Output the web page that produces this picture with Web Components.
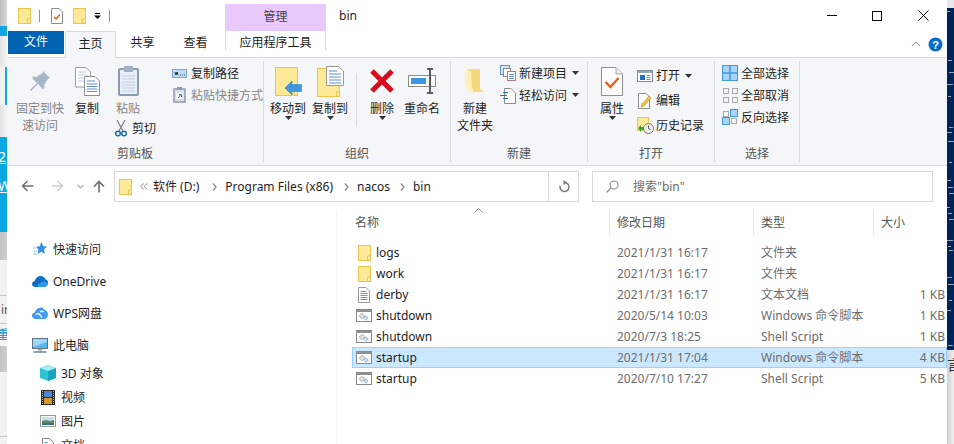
<!DOCTYPE html>
<html>
<head>
<meta charset="utf-8">
<title>bin</title>
<style>
  html, body { margin: 0; padding: 0; width: 954px; height: 444px; overflow: hidden; background: #fff; }
  body { display: flex; font: 12px/17px "Noto Sans", "Noto Sans CJK SC", sans-serif; color: #1e1e1e; }
</style>
</head>
<body>
  <desk-left></desk-left>
  <explorer-window>
    <title-bar></title-bar>
    <ribbon-tabs></ribbon-tabs>
    <ribbon-panel>
      <ribbon-group label="剪贴板" width="257" pad="9">
        <big-button icon="pin" w="48" dim>固定到快<br>速访问</big-button>
        <big-button icon="copy" w="46">复制</big-button>
        <paste-stack>
          <big-button icon="paste" w="36" dim>粘贴</big-button>
          <small-button icon="cut" row="22" w="12" gap="5" style="margin-left:5px">剪切</small-button>
        </paste-stack>
        <small-stack left="16">
          <small-button icon="copypath" row="22" w="15" gap="4">复制路径</small-button>
          <small-button icon="pasteshort" row="22" w="15" gap="4" dim>粘贴快捷方式</small-button>
        </small-stack>
      </ribbon-group>
      <ribbon-group label="组织" width="187" pad="4">
        <big-button icon="moveto" w="40" caret>移动到</big-button>
        <big-button icon="copyto" w="40" caret style="margin-left:2px">复制到</big-button>
        <ribbon-sep></ribbon-sep>
        <big-button icon="del" w="40" caret>删除</big-button>
        <big-button icon="rename" w="40">重命名</big-button>
      </ribbon-group>
      <ribbon-group label="新建" width="137" pad="4">
        <big-button icon="newfolder" w="40">新建<br>文件夹</big-button>
        <small-stack left="5">
          <small-button icon="newitem" row="22" w="16" gap="3" caret>新建项目</small-button>
          <small-button icon="easy" row="22" w="16" gap="3" caret>轻松访问</small-button>
        </small-stack>
      </ribbon-group>
      <ribbon-group label="打开" width="127" pad="4">
        <big-button icon="props" w="40" caret>属性</big-button>
        <small-stack left="5" top="1">
          <small-button icon="open" row="25" w="16" gap="3" caret>打开</small-button>
          <small-button icon="edit" row="25" w="16" gap="3">编辑</small-button>
          <small-button icon="history" row="25" w="16" gap="3">历史记录</small-button>
        </small-stack>
      </ribbon-group>
      <ribbon-group label="选择" width="85" pad="7">
        <small-stack>
          <small-button icon="selall" row="22" w="16" gap="3">全部选择</small-button>
          <small-button icon="selnone" row="22" w="16" gap="3">全部取消</small-button>
          <small-button icon="selinv" row="22" w="16" gap="3">反向选择</small-button>
        </small-stack>
      </ribbon-group>
    </ribbon-panel>
    <nav-bar></nav-bar>
    <main-area>
      <side-nav>
        <side-item icon="star" top>快速访问</side-item>
        <side-item icon="onedrive" top>OneDrive</side-item>
        <side-item icon="wps" top>WPS网盘</side-item>
        <side-item icon="pc" top>此电脑</side-item>
        <side-item icon="cube">3D 对象</side-item>
        <side-item icon="video">视频</side-item>
        <side-item icon="image">图片</side-item>
        <side-item icon="docs">文档</side-item>
      </side-nav>
      <file-list>
        <file-row icon="folder" name="logs" date="2021/1/31 16:17" type="文件夹"></file-row>
        <file-row icon="folder" name="work" date="2021/1/31 16:17" type="文件夹"></file-row>
        <file-row icon="textfile" name="derby" date="2021/1/31 16:17" type="文本文档" size="1 KB"></file-row>
        <file-row icon="script" name="shutdown" date="2020/5/14 10:03" type="Windows 命令脚本" size="1 KB"></file-row>
        <file-row icon="script" name="shutdown" date="2020/7/3 18:25" type="Shell Script" size="1 KB"></file-row>
        <file-row icon="script" name="startup" date="2021/1/31 17:04" type="Windows 命令脚本" size="4 KB" selected></file-row>
        <file-row icon="script" name="startup" date="2020/7/10 17:27" type="Shell Script" size="5 KB"></file-row>
      </file-list>
    </main-area>
  </explorer-window>
  <desk-right></desk-right>

<script>
"use strict";

const folderBody = (w, h) => `
  <rect x=".5" y=".5" width="${w - 1}" height="${h - 1}" fill="#fde998" stroke="#e9c44f"/>
  <path d="M${w - 3.5} ${h - 1}v-4h3" fill="#fff3c4" stroke="#e9c44f"/>`;

const ICONS = {
  folder: [13, 16, folderBody(13, 16)],
  qatprops: [12, 16, `<path d="M.5.5H8L11.5 4V15.5H.5z" fill="#fff" stroke="#8c8c8c"/><path d="M3 9l2 2 4-4.5" fill="none" stroke="#e8591a" stroke-width="1.5"/>`],
  pin: [22, 22, `<path d="M14 1l7 7-2 1-4 6 .5 3-1.500 1.500L9 14 2 21l-1-1 7-7-5-5 1.500-1.500 3 .5 6-4z" fill="#a9b6ca"/>`],
  copy: [25, 29, `
    <path d="M.5.5H11L15.500 5V20H.5z" fill="#fff" stroke="#9c9c9c"/>
    <path d="M3 5h8M3 8h10M3 11h10M3 14h10" stroke="#b7cbe6"/>
    <path d="M9.500 9.500H20L24.500 14V28.500H9.500z" fill="#fff" stroke="#8f8f8f"/>
    <path d="M12 14h8M12 17h10M12 19.500h10M12 22h10M12 24.500h10" stroke="#5d8fd8"/>`],
  paste: [21, 30, `
    <rect x="1" y="3" width="19" height="26" rx="1" fill="#e8eef7" stroke="#8d9bb2" stroke-width="2"/>
    <rect x="6" y="0" width="9" height="6" fill="#a3afc3"/>
    <path d="M4 10h13M4 13h13M4 16h13M4 19h13M4 22h13M4 25h13" stroke="#c4d0e0"/>`],
  copypath: [15, 9, `<rect x=".5" y=".5" width="14" height="8" fill="#bcd9f3" stroke="#7fa9cf"/><path d="M3 3l1 3 1-3 1 3M8 6h.8M10 6h.8M12 6h.8" fill="none" stroke="#26323f"/>`],
  pasteshort: [13, 16, `<rect x="1" y="2" width="11" height="13" fill="#d9e1ec" stroke="#8d9bb2" stroke-width="1.500"/><rect x="4" y="0" width="5" height="3" fill="#8d9bb2"/><rect x="3.500" y="6" width="6" height="6" fill="#fff"/><path d="M5 11l2.500-3M6 7.500h2.500V10" fill="none" stroke="#5a6a7e"/>`],
  cut: [12, 17, `<path d="M2 0l6 11M10 0L4 11" stroke="#7f7f7f" stroke-width="1.200"/><circle cx="3" cy="13.500" r="2.300" fill="none" stroke="#1c6fb5" stroke-width="1.500"/><circle cx="9" cy="13.500" r="2.300" fill="none" stroke="#1c6fb5" stroke-width="1.500"/>`],
  moveto: [27, 29, folderBody(23, 29) + `<path d="M10 21l7-7v3.500h9.500v7H17V28z" fill="#3f97e2" stroke="#2f80c9" stroke-width=".6"/>`],
  copyto: [27, 31, `<g transform="translate(0 2)">${folderBody(23, 29)}</g>
    <path d="M9.500.5H21L26.500 5V19.500H9.500z" fill="#fff" stroke="#9a9a9a"/>
    <path d="M12 5h8M12 8h12M12 11h12M12 14h12M12 17h12" stroke="#5d8fd8"/>`],
  del: [26, 26, `<path d="M3 3l20 20M23 3L3 23" stroke="#da0a1e" stroke-width="5"/>`],
  rename: [28, 26, `
    <rect x=".5" y="7.500" width="27" height="11" fill="#fff" stroke="#8b8b8b"/>
    <rect x="3" y="10" width="15" height="6" fill="#3a96e6"/>
    <path d="M19 1h6M22 1v24M19 25h6" fill="none" stroke="#5c5c5c" stroke-width="2"/>`],
  newfolder: [20, 24, `
    <path d="M2 0h13v20l4 2-1 1H8z" fill="#f5d879"/>
    <path d="M0 1l6 1 1 17 1 5-4-2-4-5z" fill="#fff0bc"/>`],
  newitem: [16, 16, `
    <rect x=".5" y=".5" width="9" height="9" fill="#d4e6f7" stroke="#5b93c7"/>
    <rect x="3.500" y="3.500" width="7" height="8" fill="#fff" stroke="#8c8c8c"/>
    <rect x="7.500" y="6.500" width="8" height="9" fill="#fff" stroke="#a87c7c"/>
    <path d="M9 9.500h5M9 11.500h5M9 13.500h5" stroke="#5d8fd8"/>`],
  easy: [16, 17, `
    <path d="M4.500 1.500H11L15.500 6V16.500H4.500z" fill="#fff" stroke="#8c8c8c"/>
    <path d="M3 5.500H8M0 8.500H7M3 11.500H8" stroke="#1f79c9" stroke-width="1.200"/>`],
  props: [22, 29, `
    <path d="M.5.5H15L21.500 7V28.500H.5z" fill="#fff" stroke="#8e8e8e"/>
    <path d="M15 .5V7h6.500" fill="#eee" stroke="#aaa"/>
    <path d="M4.500 15l5 5 8-9" fill="none" stroke="#ec5d18" stroke-width="2.400"/>`],
  open: [16, 12, `
    <rect x=".5" y=".5" width="15" height="11" fill="#fff" stroke="#7f8c9b"/>
    <rect x="1" y="1" width="14" height="2" fill="#9aa7b6"/>
    <rect x="3" y="5" width="5" height="5" fill="#1f6fc2"/>
    <path d="M9.500 5.500h4M9.500 7.500h4M9.500 9.500h4" stroke="#8296ad"/>`],
  edit: [14, 16, `
    <path d="M.5.500H8L11.500 4V15.500H.5z" fill="#fff" stroke="#8c8c8c"/>
    <path d="M3 14l1-3 7-8 2 2-7 8z" fill="#f5c33b" stroke="#b98a1c" stroke-width=".6"/>`],
  history: [17, 17, `
    <rect x=".5" y=".5" width="11" height="13" fill="#fde998" stroke="#e9c44f"/>
    <circle cx="11.500" cy="11.500" r="5" fill="#eee" stroke="#7d7d7d"/>
    <path d="M11.500 8.500v3l2 1" fill="none" stroke="#555"/>
    <path d="M1 11l3-3v2h3v3H4v2z" fill="#3aa537"/>`],
  selall: [16, 16, `
    <rect x=".5" y=".5" width="15" height="15" fill="#a9d3f7" stroke="#3f97e0"/>
    <path d="M8 0v16M0 8h16" stroke="#3f97e0" stroke-width="1.500"/>`],
  selnone: [15, 15, `<g fill="none" stroke="#a9a9a9"><rect x=".5" y=".5" width="5" height="5"/><rect x="9.500" y=".5" width="5" height="5"/><rect x=".5" y="9.500" width="5" height="5"/><rect x="9.500" y="9.500" width="5" height="5"/></g>`],
  selinv: [16, 16, `
    <rect x="8.500" y=".5" width="7" height="7" fill="#a9d3f7" stroke="#3f97e0"/>
    <rect x=".5" y="8.500" width="7" height="7" fill="#a9d3f7" stroke="#3f97e0"/>
    <rect x="1.500" y="2.500" width="5" height="5" fill="none" stroke="#a9a9a9"/>
    <rect x="9.500" y="9.500" width="5" height="5" fill="none" stroke="#a9a9a9"/>`],
  star: [14, 14, `<path d="M8.500 0l1.700 4.300 3.800.3-3 3 1 4.400-3.700-2.300-3.800 2.300 1-4.300L3 4.700l3.700-.4z" fill="#2f8fe0"/><path d="M0 6h3M1 9h3M0 12h4" stroke="#8cc4f0"/>`],
  onedrive: [16, 11, `<path d="M3.500 11C1.500 11 0 9.700 0 8c0-1.600 1.200-2.800 2.700-3C3.400 2 6 0 8.700 0c2.200 0 4 1.300 4.700 3.300 1.500.3 2.600 1.700 2.600 3.400 0 2.400-1.800 4.300-4 4.300z" fill="#0c6fc4"/><path d="M6 11c-1-2 .5-4 2.700-4 1-2 5-2.300 7 .2-.4 2.300-1.800 3.800-3.700 3.800z" fill="#2b9ae8"/>`],
  wps: [16, 12, `<path d="M3.500 12C1.500 12 0 10.500 0 8.700c0-1.700 1.200-3 2.800-3.200C3.500 3 5 1.500 7 1c1.500-1 4-1 5 1.500 2.300.7 4 2.500 4 5 0 2.500-1.700 4.500-4 4.500z" fill="#3f9bf0"/><path d="M4 8c1-2 3-2 4 0l2 2.500M8 5c1.200-1 2.500-1 3.500 0" fill="none" stroke="#fff" stroke-width="1.300"/>`],
  pc: [16, 15, `
    <rect x=".5" y=".5" width="15" height="10" fill="#58b4f0" stroke="#5f6f80"/>
    <path d="M1 1h14v3L1 9z" fill="#9ad7f8"/>
    <path d="M6 11.500h4" stroke="#8897a6" stroke-width="2"/>
    <path d="M1.500 14h13" stroke="#5f6f80" stroke-width="1.300"/>`],
  cube: [16, 16, `
    <path d="M8 0l8 3v10l-8 3-8-3V3z" fill="#2fc3d6"/>
    <path d="M8 6l8-3v10l-8 3z" fill="#17a4bd"/>
    <path d="M8 0l8 3-8 3-8-3z" fill="#a4ecf3"/>`],
  video: [14, 15, `
    <rect width="14" height="15" fill="#2b2b2b"/>
    <rect x="3" y="1" width="8" height="6" fill="#4f86d8"/>
    <rect x="3" y="8" width="8" height="6" fill="#d99a2b"/>
    <path d="M1.500 1v13M12.500 1v13" stroke="#bbb" stroke-dasharray="1 1"/>`],
  image: [16, 12, `
    <rect x=".5" y=".5" width="15" height="11" fill="#fff" stroke="#9a9a9a"/>
    <rect x="2" y="2" width="12" height="4" fill="#c8dde9"/>
    <path d="M2 6l4-1 4 1 4-1v5H2z" fill="#5d8a6a"/>
    <rect x="2" y="8" width="12" height="2" fill="#3f6f8f"/>`],
  docs: [12, 15, `
    <path d="M.5.500H7.500L11.500 4.500V14.500H.5z" fill="#fff" stroke="#8c8c8c"/>
    <path d="M2.500 4.500h3M2.500 6.500h7M2.500 8.500h7M2.500 10.500h7M2.500 12.500h5" stroke="#4d8dd0"/>`],
  textfile: [12, 16, `
    <path d="M.5.500H8L11.500 4V15.500H.5z" fill="#fff" stroke="#9a9a9a"/>
    <path d="M2.500 4.500h6M2.500 6.500h7M2.500 8.500h7M2.500 10.500h7M2.500 12.500h7" stroke="#8d8d8d"/>`],
  script: [16, 13, `
    <rect x=".5" y=".5" width="15" height="12" fill="#fff" stroke="#8a8a8a"/>
    <rect x="1" y="1" width="14" height="2" fill="#8f9295"/>
    <circle cx="6" cy="7" r="2.300" fill="#e4e4e4" stroke="#8a8a8a" stroke-dasharray="1 .6"/>
    <circle cx="10" cy="9" r="1.800" fill="#cfe4f5" stroke="#6f9cc0" stroke-dasharray="1 .6"/>`],
};

function iconSvg(name) {
  const [w, h, body] = ICONS[name];
  return `<svg xmlns="http://www.w3.org/2000/svg" width="${w}" height="${h}" viewBox="0 0 ${w} ${h}" style="display:block;flex:none">${body}</svg>`;
}

const CARET = `<svg width="7" height="4" viewBox="0 0 7 4" style="display:block;flex:none"><path d="M0 0h7L3.500 4z" fill="#333"/></svg>`;

// base class, saves repeating attachShadow in every element
class Shadowed extends HTMLElement {
  render(html) {
    if (!this.shadowRoot) this.attachShadow({ mode: "open" });
    this.shadowRoot.innerHTML = html;
  }
}

function define(tag, render) {
  customElements.define(tag, class extends Shadowed {
    connectedCallback() { this.render(render(this)); }
  });
}

define("explorer-window", () => `
  <style>
    :host { display: flex; flex-direction: column; width: 940px; height: 444px; background: #fff; flex: none; }
  </style>
  <slot></slot>`);

define("title-bar", () => `
  <style>
    :host { display: flex; align-items: center; height: 31px; flex: none; position: relative; }
    .q { display: flex; align-items: center; padding-left: 11px; width: 218px; box-sizing: border-box; height: 31px; }
    .q > * { flex: none; }
    .sep { width: 1px; height: 12px; background: #8f8f8f; }
    .manage { width: 101px; height: 27px; margin-top: 4px; background: #e9c9fb; text-align: center; line-height: 26px; color: #444; }
    .name { margin-left: 13px; line-height: 31px; }
    .wc { margin-left: auto; display: flex; align-items: center; height: 31px; }
  </style>
  <div class="q">
    ${iconSvg("folder")}
    <div class="sep" style="margin-left:8px"></div>
    <div style="margin-left:11px">${iconSvg("qatprops")}</div>
    <div style="margin-left:10px">${iconSvg("folder")}</div>
    <svg width="7" height="7" viewBox="0 0 7 7" style="margin-left:8px;margin-top:2px"><path d="M1 .5h5" stroke="#000"/><path d="M0 2.500h7L3.500 6z"/></svg>
    <div class="sep" style="margin-left:8px"></div>
  </div>
  <div class="manage">管理</div>
  <div class="name">bin</div>
  <div class="wc">
    <svg width="10" height="1" style="margin-right:35px"><rect width="10" height="1" fill="#000"/></svg>
    <svg width="10" height="10" style="margin-right:36px"><rect x=".5" y=".5" width="9" height="9" fill="none" stroke="#000"/></svg>
    <svg width="11" height="11" style="margin-right:18px"><path d="M.5.5l10 10M10.500.5l-10 10" stroke="#000" fill="none"/></svg>
  </div>`);

define("ribbon-tabs", () => `
  <style>
    :host { display: flex; height: 27px; flex: none; align-items: flex-start; border-bottom: 1px solid #dadbdc; box-sizing: border-box; position: relative; }
    .t { height: 26px; line-height: 24px; text-align: center; flex: none; }
    .file { width: 56px; height: 23px; margin-left: 1px; background: #0063b1; color: #fff; line-height: 22px; }
    .home { width: 51px; height: 27px; margin-left: 1px; background: #f5f6f7; border: 1px solid #dadbdc; border-bottom: 0; box-sizing: border-box; line-height: 23px; z-index: 1; }
    .tools { width: 101px; box-sizing: border-box; border-left: 1px solid #dadbdc; border-right: 1px solid #dadbdc; height: 20px; }
    .help { margin-left: auto; display: flex; align-items: center; height: 26px; margin-right: 4px; }
  </style>
  <div class="t file">文件</div>
  <div class="t home">主页</div>
  <div class="t" style="width:53px">共享</div>
  <div class="t" style="width:53px">查看</div>
  <div class="t tools" style="margin-left:3px">应用程序工具</div>
  <div class="help">
    <svg width="10" height="6" style="margin-right:7px"><path d="M1 5l4-4 4 4" fill="none" stroke="#aaa" stroke-width="1.200"/></svg>
    <svg width="15" height="15" viewBox="0 0 15 15"><circle cx="7.500" cy="7.500" r="7" fill="#0a6fc4"/><text x="7.500" y="11.500" text-anchor="middle" font-size="11" font-weight="700" fill="#fff" font-family="Liberation Sans, sans-serif">?</text></svg>
  </div>`);

define("ribbon-panel", () => `
  <style>
    :host { display: flex; height: 108px; flex: none; background: #f5f6f7; border-bottom: 1px solid #dadbdc; box-sizing: border-box; }
  </style>
  <slot></slot>`);

define("ribbon-group", (el) => `
  <style>
    :host { display: flex; flex-direction: column; flex: none; width: ${el.getAttribute("width")}px; box-sizing: border-box; height: 107px; position: relative; }
    .body { flex: 1; display: flex; align-items: flex-start; padding-left: ${el.getAttribute("pad")}px; min-height: 0; }
    .label { text-align: center; color: #555; line-height: 17px; padding-bottom: 3px; padding-right: 1px; }
    .line { position: absolute; right: 0; top: 3px; bottom: 3px; width: 1px; background: #dadbdc; }
  </style>
  <div class="body"><slot></slot></div>
  <div class="label">${el.getAttribute("label")}</div>
  <div class="line"></div>`);

define("ribbon-sep", () => `
  <style>
    :host { display: block; width: 1px; height: 54px; background: #dadbdc; margin: 15px 5px 0 6px; flex: none; }
  </style>`);

define("big-button", (el) => `
  <style>
    :host { display: flex; flex-direction: column; align-items: center; flex: none; width: ${el.getAttribute("w")}px; padding-top: 4px; text-align: center; ${el.hasAttribute("dim") ? "color:#858585;" : ""} white-space: nowrap; }
    .pic { height: 38px; display: flex; align-items: center; justify-content: center; }
    .caret { margin-top: -1px; }
  </style>
  <div class="pic">${iconSvg(el.getAttribute("icon"))}</div>
  <div><slot></slot></div>
  ${el.hasAttribute("caret") ? `<div class="caret">${CARET}</div>` : ""}`);

define("small-button", (el) => `
  <style>
    :host { display: flex; align-items: center; height: ${el.getAttribute("row")}px; white-space: nowrap; flex: none; ${el.hasAttribute("dim") ? "color:#858585;" : ""} }
    .box { width: ${el.getAttribute("w")}px; display: flex; justify-content: center; margin-right: ${el.getAttribute("gap")}px; flex: none; }
    .caret { margin-left: 5px; }
  </style>
  <div class="box">${iconSvg(el.getAttribute("icon"))}</div>
  <slot></slot>
  ${el.hasAttribute("caret") ? `<div class="caret">${CARET}</div>` : ""}`);

define("small-stack", (el) => `
  <style>
    :host { display: flex; flex-direction: column; flex: none; margin-left: ${el.getAttribute("left") || 0}px; padding-top: ${4 + Number(el.getAttribute("top") || 0)}px; }
  </style>
  <slot></slot>`);

define("paste-stack", () => `
  <style>
    :host { display: flex; flex-direction: column; flex: none; }
  </style>
  <slot></slot>`);

const crumb = `<svg width="5" height="8" style="flex:none"><path d="M1 .5L4 4 1 7.500" fill="none" stroke="#8a8a8a" stroke-width="1.300"/></svg>`;

define("nav-bar", () => `
  <style>
    :host { display: flex; height: 36px; flex: none; align-items: flex-start; padding-top: 5px; box-sizing: border-box; }
    svg { flex: none; display: block; }
    .btns { display: flex; align-items: center; height: 30px; width: 107px; flex: none; padding-left: 14px; box-sizing: border-box; }
    .addr { width: 465px; height: 31px; border: 1px solid #d9d9d9; box-sizing: border-box; display: flex; align-items: center; flex: none; }
    .addr span { flex: none; line-height: 28px; white-space: nowrap; }
    .refresh { margin-left: auto; width: 31px; height: 29px; border-left: 1px solid #d9d9d9; display: flex; align-items: center; justify-content: center; box-sizing: border-box; }
    .search { width: 341px; height: 31px; margin-left: 13px; border: 1px solid #d9d9d9; box-sizing: border-box; display: flex; align-items: center; color: #6d6d6d; flex: none; }
  </style>
  <div class="btns">
    <svg width="13" height="12" viewBox="0 0 13 12"><path d="M12.500 6H1.500M6.500 1l-5 5 5 5" fill="none" stroke="#6f6f6f" stroke-width="1.500"/></svg>
    <svg width="13" height="12" viewBox="0 0 13 12" style="margin-left:17px"><path d="M.5 6h11M6.500 1l5 5-5 5" fill="none" stroke="#cfcfcf" stroke-width="1.500"/></svg>
    <svg width="7" height="5" viewBox="0 0 7 5" style="margin-left:13px"><path d="M.5 1l3 3 3-3" fill="none" stroke="#aaa" stroke-width="1.200"/></svg>
    <svg width="12" height="13" viewBox="0 0 12 13" style="margin-left:9px"><path d="M6 12.500V1.500M1 6.500l5-5 5 5" fill="none" stroke="#6f6f6f" stroke-width="1.600"/></svg>
  </div>
  <div class="addr">
    <div style="margin-left:4px;flex:none">${iconSvg("folder")}</div>
    <svg width="8" height="7" viewBox="0 0 8 7" style="margin-left:8px"><path d="M3.500 .5L1 3.500l2.500 3M7 .5L4.500 3.500 7 6.500" fill="none" stroke="#8a8a8a"/></svg>
    <span style="margin-left:5px">软件 (D:)</span>
    <div style="margin-left:13px;display:flex">${crumb}</div>
    <span style="margin-left:8px">Program Files (x86)</span>
    <div style="margin-left:11px;display:flex">${crumb}</div>
    <span style="margin-left:8px">nacos</span>
    <div style="margin-left:10px;display:flex">${crumb}</div>
    <span style="margin-left:8px">bin</span>
    <div class="refresh" style="margin-right:0;width:30px">
      <svg width="12" height="13" viewBox="0 0 12 13"><path d="M6.500 2.500a4.500 4.500 0 1 1-4.300 3.200" fill="none" stroke="#7a7a7a" stroke-width="1.500"/><path d="M5.500 0l3.500 2.500L5.500 5z" fill="#7a7a7a"/></svg>
    </div>
  </div>
  <div class="search">
    <svg width="13" height="13" viewBox="0 0 13 13" style="margin-left:13px"><circle cx="8" cy="5" r="4" fill="none" stroke="#8a8a8a" stroke-width="1.100"/><path d="M5 8l-4.500 4.500" stroke="#8a8a8a" stroke-width="1.300"/></svg>
    <span style="margin-left:14px">搜索"bin"</span>
  </div>`);

define("main-area", () => `
  <style>
    :host { display: flex; flex: 1; min-height: 0; overflow: hidden; }
  </style>
  <slot></slot>`);

define("side-nav", () => `
  <style>
    :host { display: flex; flex-direction: column; width: 330px; flex: none; padding-top: 23px; box-sizing: border-box; border-right: 1px solid #f3f3f3; margin-top: 8px; height: 250px; }
  </style>
  <slot></slot>`);

define("side-item", (el) => {
  const top = el.hasAttribute("top");
  return `
  <style>
    :host { display: flex; align-items: center; height: ${top ? 32 : 24}px; flex: none; white-space: nowrap; padding-left: ${top ? 25 : 33}px; box-sizing: border-box; }
    .box { width: 16px; display: flex; justify-content: center; margin-right: ${top ? 5 : 5}px; flex: none; }
  </style>
  <div class="box">${iconSvg(el.getAttribute("icon"))}</div><slot></slot>`;
});

define("file-list", () => `
  <style>
    :host { display: flex; flex-direction: column; flex: none; width: 595px; margin-left: 15px; position: relative; }
    .head { display: grid; grid-template-columns: 257px 144px 120px 1fr; height: 27px; margin-top: 7px; margin-bottom: 6px; color: #555; }
    .head div { line-height: 27px; padding-left: 7px; border-left: 1px solid #e5e5e5; white-space: nowrap; }
    .head div:first-child { border-left: 0; padding-left: 3px; }
    .sort { position: absolute; left: 122px; top: 6px; }
  </style>
  <div class="head"><div>名称</div><div>修改日期</div><div>类型</div><div>大小</div></div>
  <svg class="sort" width="9" height="5"><path d="M.5 4.500l4-4 4 4" fill="none" stroke="#8a8a8a"/></svg>
  <slot></slot>`);

define("file-row", (el) => {
  const sel = el.hasAttribute("selected");
  return `
  <style>
    :host { display: grid; grid-template-columns: 257px 144px 1fr; height: 21px; flex: none; box-sizing: border-box; align-items: center; white-space: nowrap; ${sel ? "background:#cce8ff;box-shadow:inset 0 0 0 1px #99d1ff;" : ""} }
    .n { display: flex; align-items: center; padding-left: 4px; }
    .box { width: 16px; display: flex; justify-content: center; margin-right: 4px; flex: none; }
    .c { padding-left: 8px; color: #6d6d6d; display: flex; }
    .s { margin-left: auto; padding-right: 2px; }
  </style>
  <div class="n"><div class="box">${iconSvg(el.getAttribute("icon"))}</div>${el.getAttribute("name")}</div>
  <div class="c">${el.getAttribute("date")}</div>
  <div class="c"><span>${el.getAttribute("type")}</span><span class="s">${el.getAttribute("size") || ""}</span></div>`;
});

define("desk-left", () => `
  <style>
    :host { display: flex; flex-direction: column; width: 7px; height: 444px; flex: none; overflow: hidden; background: #f4f4f4; font-size: 14px; line-height: 20px; }
    .b { flex: none; overflow: hidden; white-space: nowrap; }
    .line { height: 1px; background: #c8c8c8; flex: none; }
    .txt { color: #fff; text-decoration: underline; line-height: 29px; text-indent: -2px; }
  </style>
  <div class="b" style="height:26px;background:linear-gradient(90deg,#bdbdbd,#d9d9d9)"></div>
  <div class="b" style="height:10px;background:#10a5e2"></div>
  <div class="b" style="height:31px;background:linear-gradient(90deg,#e2e2e2,#f4f4f4)"></div>
  <div class="b" style="height:38px;background:linear-gradient(90deg,#f0f0f0 5px,#10a5e2 5px)"></div>
  <div class="b" style="height:32px;background:linear-gradient(90deg,#e2e2e2,#f4f4f4)"></div>
  <div class="b" style="height:95px;background:#0aa7e3;padding-top:5px;box-sizing:border-box">
    <div class="txt">2</div><div class="txt">W</div>
  </div>
  <div class="b" style="height:28px;background:linear-gradient(90deg,#c2c2c2,#cfcfcf)"></div>
  <div class="b" style="height:35px;background:#f2f2f2"></div>
  <div class="line"></div>
  <div class="b" style="height:27px;background:#f2f2f2;color:#555;font-size:12px;line-height:27px;text-indent:1px">ir</div>
  <div class="line"></div>
  <div class="b" style="height:22px;background:#f4f4f4;color:#0f8fd0;font-size:12px;line-height:22px;text-indent:-3px">重</div>
  <div class="b" style="height:26px;background:linear-gradient(90deg,#c2c2c2,#cfcfcf)"></div>
  <div class="b" style="height:64px;background:#f2f2f2"></div>
  <div class="line"></div>
  <div class="b" style="height:8px;background:#f2f2f2"></div>`);

define("desk-right", () => {
  // scraps of console output, just tiny pale dashes on the navy
  const rows = [11, 60, 72, 84, 96, 127, 132, 141, 162, 180, 187, 193, 207, 213, 219, 240, 246, 250, 277, 284, 300, 310, 345];
  const dashes = rows.map((y, i) => `<rect x="${i % 3}" y="${y}" width="${3 + (i * 5) % 4}" height="1" fill="#8fa6c4"/>`).join("");
  return `
  <style>
    :host { display: flex; flex-direction: column; width: 7px; height: 444px; flex: none; overflow: hidden; }
    .top { height: 8px; flex: none; background: #e8e8e8; }
    .navy { height: 342px; flex: none; background: #012456; }
    .rest { flex: 1; background: linear-gradient(90deg,#cfcfcf,#f0f0f0); color: #333; font-size: 14px; line-height: 20px; white-space: nowrap; padding-top: 5px; overflow: hidden; }
    svg { display: block; }
  </style>
  <div class="top"></div>
  <div class="navy"><svg width="7" height="342" viewBox="0 8 7 342">${dashes}</svg></div>
  <div class="rest">言</div>`;
});
</script>
</body>
</html>
